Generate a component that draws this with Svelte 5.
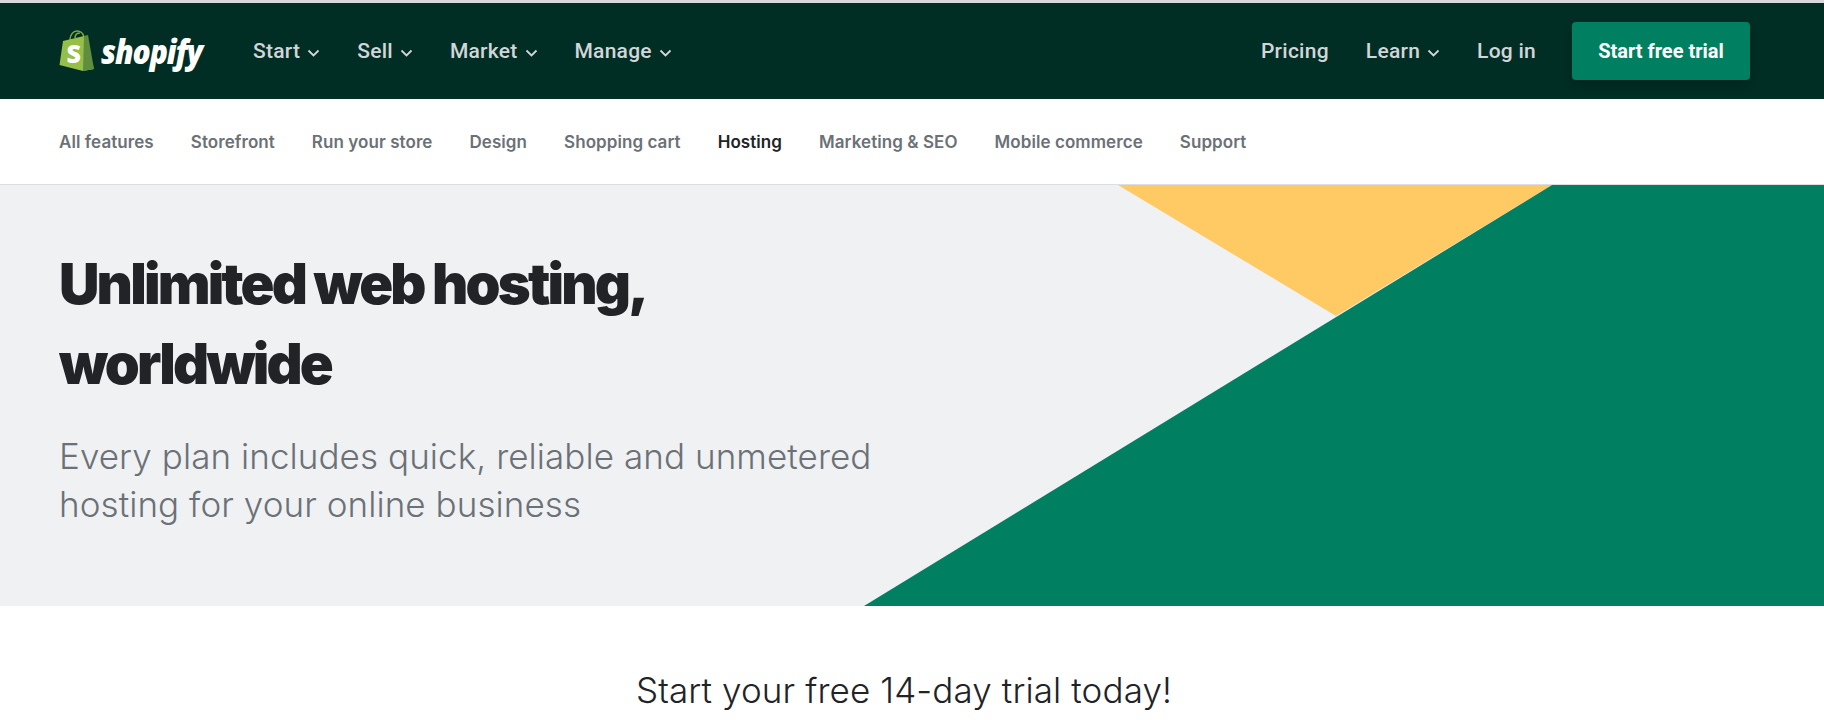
<script>
  const mainLinks = [
    { label: 'Start', caret: true },
    { label: 'Sell', caret: true },
    { label: 'Market', caret: true },
    { label: 'Manage', caret: true }
  ];
  const features = ['All features', 'Storefront', 'Run your store', 'Design', 'Shopping cart', 'Hosting', 'Marketing & SEO', 'Mobile commerce', 'Support'];
</script>

{#snippet caret()}
  <svg class="caret" width="13" height="8" viewBox="0 0 13 8" aria-hidden="true">
    <path d="M1.500 1.500l5 5 5-5" fill="none" stroke="currentColor" stroke-width="1.8" />
  </svg>
{/snippet}

<div class="page">
  <header class="topbar">
    <a class="logo" href="#top">
      <svg class="bag" width="36" height="42" viewBox="0 0 36 42" aria-hidden="true">
        <path d="M11 10C11 5 14 1 18 1c4 0 6 2 7 6M16 8c0-3 2-5 5-5" fill="none" stroke="#7fa83c" stroke-width="1.5" />
        <path d="M.5 35 4 11l21-5 10 33-11 2z" fill="#95bf47" />
        <path d="M25 6l4-1 6 34-11 2z" fill="#5e8e3e" />
        <text x="7.500" y="33" class="bag-s">S</text>
      </svg>
      <span class="wordmark">shopify</span>
    </a>
    <nav class="main-nav">
      {#each mainLinks as link}
        <a href="#top">{link.label}{@render caret()}</a>
      {/each}
    </nav>
    <nav class="right-nav">
      <a href="#top">Pricing</a>
      <a href="#top">Learn{@render caret()}</a>
      <a href="#top">Log in</a>
      <a class="cta" href="#top">Start free trial</a>
    </nav>
  </header>

  <nav class="subnav">
    {#each features as item}
      <a href="#top" class:active={item === 'Hosting'}>{item}</a>
    {/each}
  </nav>

  <section class="hero">
    <svg class="shapes" viewBox="0 0 1824 421" preserveAspectRatio="none" aria-hidden="true">
      <polygon points="1118,0 1552,0 1336,131" fill="#ffc964" />
      <polygon points="1552,0 1824,0 1824,421 864,421" fill="#008060" />
    </svg>
    <div class="hero-text">
      <h1>Unlimited web hosting,<br />worldwide</h1>
      <p>Every plan includes quick, reliable and unmetered hosting for your online business</p>
    </div>
  </section>

  <section class="trial">
    <h2>Start your free 14-day trial today!</h2>
  </section>
</div>

<style>
  :global(body) {
    background: #fff;
    overflow: hidden;
  }

  .page {
    height: 726px;
    overflow: hidden;
    font-family: Inter, "Liberation Sans", sans-serif;
    border-top: 3px solid #d8d8d8;
    box-sizing: border-box;
  }

  a {
    text-decoration: none;
    color: inherit;
  }

  /* Dark top bar */
  .topbar {
    height: 96px;
    background: #002e25;
    display: flex;
    align-items: center;
    padding: 0 74px 0 59px;
    color: #d2d6d9;
    font-family: Roboto, sans-serif;
    font-size: 21px;
    font-weight: 500;
    letter-spacing: 0.25px;
  }

  .logo {
    display: flex;
    align-items: center;
    gap: 6px;
    width: 194px;
    flex: none;
  }

  .wordmark {
    display: inline-block;
    font-family: "Open Sans", sans-serif;
    font-style: italic;
    font-weight: 800;
    font-size: 33px;
    letter-spacing: -1.2px;
    color: #fff;
    line-height: 1;
    transform: scaleX(0.91);
    transform-origin: left center;
  }

  .bag-s {
    font-family: "Open Sans", sans-serif;
    font-weight: 800;
    font-size: 25px;
    fill: #fff;
  }

  .main-nav,
  .right-nav {
    display: flex;
    align-items: center;
    gap: 37px;
  }

  .right-nav {
    margin-left: auto;
  }

  .caret {
    margin-left: 7px;
    vertical-align: 1px;
  }

  .cta {
    margin-left: -1px;
    width: 178px;
    height: 58px;
    background: #008060;
    color: #fff;
    border-radius: 4px;
    display: flex;
    align-items: center;
    justify-content: center;
    font-size: 20px;
    font-weight: 700;
    letter-spacing: 0;
    box-shadow: 0 5px 15px rgba(0, 0, 0, 0.2);
  }

  /* Feature links */
  .subnav {
    height: 85px;
    display: flex;
    align-items: center;
    gap: 37px;
    padding-left: 59px;
    color: #6b7177;
    font-size: 17px;
    font-weight: 600;
    letter-spacing: 0.07px;
    border-bottom: 1px solid #dcdee0;
    box-sizing: content-box;
  }

  .active {
    color: #212326;
  }

  /* Hero */
  .hero {
    position: relative;
    height: 421px;
    background: #f0f1f3;
  }

  .shapes {
    position: absolute;
    inset: 0;
    width: 100%;
    height: 100%;
  }

  .hero-text {
    position: relative;
    padding: 59px 0 0 59px;
    width: 830px;
  }

  h1 {
    margin: 0;
    font-size: 56px;
    font-weight: 900;
    line-height: 80px;
    letter-spacing: -2.8px;
    color: #212326;
  }

  p {
    margin: 28px 0 0;
    font-size: 35px;
    line-height: 48px;
    font-weight: 300;
    letter-spacing: 0.07px;
    color: #6b7177;
  }

  .trial {
    text-align: center;
    padding-right: 16px;
  }

  h2 {
    margin: 0;
    padding-top: 60px;
    font-size: 35px;
    line-height: 48px;
    font-weight: 300;
    letter-spacing: 0.12px;
    color: #212326;
  }
</style>
